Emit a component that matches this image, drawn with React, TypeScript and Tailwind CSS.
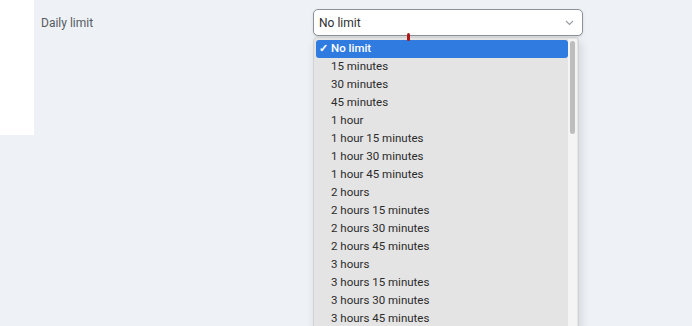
import React from "react";

const options = [
  "15 minutes",
  "30 minutes",
  "45 minutes",
  "1 hour",
  "1 hour 15 minutes",
  "1 hour 30 minutes",
  "1 hour 45 minutes",
  "2 hours",
  "2 hours 15 minutes",
  "2 hours 30 minutes",
  "2 hours 45 minutes",
  "3 hours",
  "3 hours 15 minutes",
  "3 hours 30 minutes",
  "3 hours 45 minutes",
];

export default function App() {
  return (
    <div
      className="w-[692px] h-[326px] overflow-hidden bg-[#eef1f5] flex text-[#3a3a3a]"
      style={{ fontFamily: "Roboto, 'Noto Sans', sans-serif" }}
    >
      <div className="w-[34px] h-[135px] bg-white shrink-0" />
      <div className="flex-1 relative">
        <div className="flex items-start pt-[9px]">
          <div className="w-[279px] pl-[7px] pt-[5px] text-[12px] text-[#555a60]">Daily limit</div>
          <div className="w-[270px] h-[27px] bg-white border border-[#8e9298] rounded-[5px] flex items-center justify-between pl-[5px] pr-[8px] text-[12px] text-[#2e2e2e] shadow-sm">
            <span>No limit</span>
            <svg width="9" height="6" viewBox="0 0 9 6" fill="none">
              <path d="M1 1l3.5 3.5L8 1" stroke="#9aa0a6" strokeWidth="1.2" />
            </svg>
          </div>
        </div>
        <div className="absolute left-[279px] top-[37px] w-[266px] h-[300px] bg-[#e4e4e4] border border-[#d2d2d2] rounded-[4px] shadow-[2px_4px_10px_rgba(0,0,0,0.12)] flex">
          <div className="flex-1 pl-[2px] pt-[2px] flex flex-col text-[11.5px] text-[#2b2b2b]">
            <div className="h-[18px] bg-[#2f7be0] rounded-[3px] text-white flex items-center pl-[3px]">
              <span className="w-[12px] text-[11px] font-bold">✓</span>
              <span className="font-medium">No limit</span>
            </div>
            {options.map((o) => (
              <div key={o} className="h-[18px] flex items-center pl-[15px]">
                {o}
              </div>
            ))}
          </div>
          <div className="w-[9px] mr-[1px] mt-[1px] bg-[#f4f4f4] flex justify-center">
            <div className="w-[5px] h-[93px] mt-[2px] bg-[#bdbdbd] rounded-full" />
          </div>
        </div>
        <div className="absolute left-[373px] top-[33px] w-[3px] h-[8px] bg-[#b01818] rounded-full" />
      </div>
    </div>
  );
}
